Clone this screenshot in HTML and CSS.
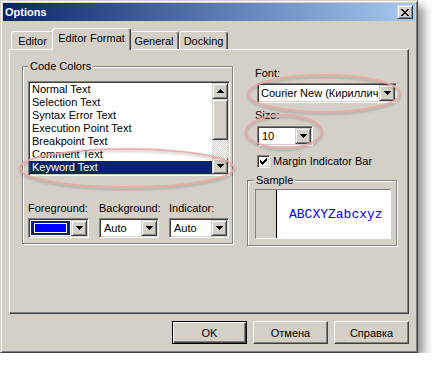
FILE: index.html
```html
<!DOCTYPE html>
<html lang="ru">
<head>
    <meta charset="UTF-8">
    <title>Options</title>
    <link rel="stylesheet" href="styles.css">
</head>
<body>
    <div class="window">
        <div class="titlebar">
            <span class="title">Options</span>
            <button class="close raised">
                <svg width="8" height="7" viewBox="0 0 8 7"><path d="M0 0h2v1H0zM6 0h2v1H6zM1 1h2v1H1zM5 1h2v1H5zM2 2h4v1H2zM3 3h2v1H3zM2 4h4v1H2zM1 5h2v1H1zM5 5h2v1H5zM0 6h2v1H0zM6 6h2v1H6z"/></svg>
            </button>
        </div>

        <div class="tabs">
            <div class="tab tab-editor">Editor</div>
            <div class="tab tab-active">Editor Format</div>
            <div class="tab tab-general">General</div>
            <div class="tab tab-docking">Docking</div>
        </div>

        <div class="panel">
            <div class="group code-colors">
                <div class="group-title">Code Colors</div>
                <div class="listbox sunken">
                    <ul class="items">
                        <li>Normal Text</li>
                        <li>Selection Text</li>
                        <li>Syntax Error Text</li>
                        <li>Execution Point Text</li>
                        <li>Breakpoint Text</li>
                        <li>Comment Text</li>
                        <li class="selected">Keyword Text</li>
                    </ul>
                    <div class="scrollbar">
                        <div class="sb-btn raised">
                            <svg width="7" height="4" viewBox="0 0 7 4"><path d="M3 0h1v1h1v1h1v1h1v1H0V3h1V2h1V1h1z"/></svg>
                        </div>
                        <div class="sb-thumb raised"></div>
                        <div class="sb-track"></div>
                        <div class="sb-btn raised">
                            <svg width="7" height="4" viewBox="0 0 7 4"><path d="M0 0h7v1H6v1H5v1H4v1H3V3H2V2H1V1H0z"/></svg>
                        </div>
                    </div>
                </div>

                <div class="pickers">
                    <div class="picker picker-wide">
                        <div class="field-label">Foreground:</div>
                        <div class="combo sunken">
                            <div class="combo-value"><span class="swatch"><span class="swatch-fill"></span></span></div>
                            <div class="drop raised"><svg width="7" height="4" viewBox="0 0 7 4"><path d="M0 0h7v1H6v1H5v1H4v1H3V3H2V2H1V1H0z"/></svg></div>
                        </div>
                    </div>
                    <div class="picker">
                        <div class="field-label">Background:</div>
                        <div class="combo sunken">
                            <div class="combo-value">Auto</div>
                            <div class="drop raised"><svg width="7" height="4" viewBox="0 0 7 4"><path d="M0 0h7v1H6v1H5v1H4v1H3V3H2V2H1V1H0z"/></svg></div>
                        </div>
                    </div>
                    <div class="picker">
                        <div class="field-label">Indicator:</div>
                        <div class="combo sunken">
                            <div class="combo-value">Auto</div>
                            <div class="drop raised"><svg width="7" height="4" viewBox="0 0 7 4"><path d="M0 0h7v1H6v1H5v1H4v1H3V3H2V2H1V1H0z"/></svg></div>
                        </div>
                    </div>
                </div>
            </div>

            <div class="side">
                <div class="side-label">Font:</div>
                <div class="combo sunken font-combo">
                    <div class="combo-value">Courier New (Кириллич</div>
                    <div class="drop raised"><svg width="7" height="4" viewBox="0 0 7 4"><path d="M0 0h7v1H6v1H5v1H4v1H3V3H2V2H1V1H0z"/></svg></div>
                </div>

                <div class="side-label size-label">Size:</div>
                <div class="combo sunken size-combo">
                    <div class="combo-value">10</div>
                    <div class="drop raised"><svg width="7" height="4" viewBox="0 0 7 4"><path d="M0 0h7v1H6v1H5v1H4v1H3V3H2V2H1V1H0z"/></svg></div>
                </div>

                <div class="check-row">
                    <span class="checkbox sunken">
                        <svg width="7" height="7" viewBox="0 0 7 7"><path d="M6 0h1v1H6zM5 1h2v1H5zM0 2h1v1H0zM4 2h3v1H4zM0 3h2v1H0zM3 3h3v1H3zM0 4h5v1H0zM1 5h3v1H1zM2 6h1v1H2z"/></svg>
                    </span>
                    <span>Margin Indicator Bar</span>
                </div>

                <div class="group sample">
                    <div class="group-title">Sample</div>
                    <div class="sample-box">
                        <div class="sample-margin"></div>
                        <div class="sample-text">ABCXYZabcxyz</div>
                    </div>
                </div>
            </div>
        </div>

        <div class="actions">
            <button class="btn btn-default">OK</button>
            <button class="btn">Отмена</button>
            <button class="btn">Справка</button>
        </div>
    </div>

    <svg class="marks" width="434" height="370" viewBox="0 0 434 370">
        <ellipse cx="127" cy="168" rx="107" ry="19"/>
        <ellipse cx="324" cy="93.5" rx="76" ry="18.5"/>
        <ellipse cx="284" cy="131.5" rx="38" ry="16.5"/>
    </svg>
</body>
</html>
```

FILE: styles.css
```css
body {
    margin: 0;
    background: #ffffff;
    font-family: "Liberation Sans", Arial, sans-serif;
    font-size: 11px;
    color: #000000;
}

/* classic 3d edges */
.raised {
    border: 1px solid;
    border-color: #d4d0c8 #404040 #404040 #d4d0c8;
    box-shadow: inset 1px 1px 0 #ffffff, inset -1px -1px 0 #808080;
}
.sunken {
    border: 1px solid;
    border-color: #808080 #ffffff #ffffff #808080;
    box-shadow: inset 1px 1px 0 #404040, inset -1px -1px 0 #d4d0c8;
    padding: 1px;
}

.window {
    box-sizing: border-box;
    width: 418px;
    height: 353px;
    background: #d4d0c8;
    border: 1px solid;
    border-color: #d4d0c8 #404040 #404040 #d4d0c8;
    box-shadow: inset 1px 1px 0 #ffffff, inset -1px -1px 0 #808080, 6px 6px 9px rgba(0, 0, 0, 0.42);
    padding: 2px 2px 8px;
    display: flex;
    flex-direction: column;
}

.titlebar {
    height: 18px;
    display: flex;
    align-items: center;
    justify-content: space-between;
    padding: 0 2px;
    background: linear-gradient(to right, #0a246a, #a6caf0);
}
.title {
    color: #ffffff;
    font-weight: bold;
    line-height: 18px;
}
.close {
    box-sizing: border-box;
    width: 16px;
    height: 14px;
    padding: 0;
    background: #d4d0c8;
    display: flex;
    align-items: center;
    justify-content: center;
}

.tabs {
    display: flex;
    align-items: flex-end;
    height: 21px;
    margin-top: 7px;
    padding-left: 8px;
}
.tab {
    box-sizing: border-box;
    height: 18px;
    padding-top: 3px;
    line-height: 13px;
    text-align: center;
    white-space: nowrap;
    background: #d4d0c8;
    border: 1px solid;
    border-bottom: 0;
    border-color: #ffffff #404040 transparent #ffffff;
    border-radius: 3px 3px 0 0;
    box-shadow: inset -1px 0 0 #808080;
}
.tab-editor { width: 43px; }
.tab-general { width: 50px; }
.tab-docking { width: 49px; }
.tab-active {
    width: 79px;
    height: 22px;
    margin: 0 -2px -1px;
    position: relative;
    z-index: 1;
}

.panel {
    box-sizing: border-box;
    height: 265px;
    margin: 0 6px;
    border: 1px solid;
    border-color: #ffffff #404040 #404040 #ffffff;
    box-shadow: inset -1px -1px 0 #808080;
    display: flex;
    align-items: flex-start;
    padding: 16px 0 0 12px;
}

.group {
    box-sizing: border-box;
    border: 1px solid #808080;
    box-shadow: inset 1px 1px 0 #ffffff, 1px 1px 0 #ffffff;
}
.group-title {
    width: fit-content;
    margin-top: -7px;
    padding: 0 2px;
    line-height: 13px;
    background: #d4d0c8;
}

.code-colors {
    width: 211px;
    height: 178px;
    margin-right: 14px;
    padding: 0 2px 0 5px;
}

.listbox {
    box-sizing: border-box;
    width: 202px;
    height: 95px;
    margin-top: 8px;
    display: flex;
    background: #ffffff;
}
.items {
    flex: 1;
    list-style: none;
    margin: 0;
    padding: 0;
    overflow: hidden;
}
.items li {
    line-height: 13px;
    padding-left: 2px;
    white-space: nowrap;
}
.items .selected {
    background: #0a246a;
    color: #ffffff;
}

.scrollbar {
    width: 16px;
    display: flex;
    flex-direction: column;
}
.sb-btn {
    box-sizing: border-box;
    height: 16px;
    background: #d4d0c8;
    display: flex;
    align-items: center;
    justify-content: center;
}
.sb-thumb {
    box-sizing: border-box;
    height: 41px;
    background: #d4d0c8;
}
.sb-track {
    flex: 1;
    background: repeating-conic-gradient(#ffffff 0 25%, #d4d0c8 0 50%) 0 0 / 2px 2px;
}

.pickers {
    display: flex;
    gap: 10px;
    margin-top: 26px;
}
.picker { width: 60px; }
.picker-wide { width: 61px; }
.field-label {
    line-height: 13px;
    white-space: nowrap;
}

.combo {
    box-sizing: border-box;
    height: 20px;
    margin-top: 3px;
    display: flex;
    background: #ffffff;
}
.combo-value {
    flex: 1;
    min-width: 0;
    padding-left: 3px;
    line-height: 16px;
    overflow: hidden;
    white-space: nowrap;
}
.drop {
    box-sizing: border-box;
    width: 16px;
    height: 16px;
    background: #d4d0c8;
    display: flex;
    align-items: center;
    justify-content: center;
}
.picker-wide .combo-value { padding-left: 0; }
.swatch {
    display: block;
    box-sizing: border-box;
    height: 14px;
    margin: 1px;
    padding: 2px 3px;
    background: #0a246a;
}
.swatch-fill {
    display: block;
    box-sizing: border-box;
    height: 100%;
    border: 1px solid #ffffff;
    background: #0000ff;
}

.side {
    width: 150px;
    display: flex;
    flex-direction: column;
    align-items: flex-start;
}
.side-label {
    margin: 1px 0 0 8px;
    line-height: 13px;
}
.size-label { margin-top: 6px; }
.font-combo {
    width: 140px;
    margin: 3px 0 0 10px;
}
.font-combo .combo-value { padding-left: 2px; }
.size-combo {
    width: 56px;
    margin: 4px 0 0 10px;
}

.check-row {
    display: flex;
    align-items: center;
    gap: 3px;
    margin: 9px 0 0 10px;
    line-height: 13px;
}
.checkbox {
    box-sizing: border-box;
    width: 13px;
    height: 13px;
    background: #ffffff;
    display: flex;
    align-items: center;
    justify-content: center;
}

.sample {
    width: 150px;
    height: 66px;
    margin-top: 12px;
    padding-left: 7px;
}
.sample .group-title { margin-left: -1px; }
.sample-box {
    box-sizing: border-box;
    width: 136px;
    height: 50px;
    margin-top: 2px;
    display: flex;
    background: #ffffff;
    border: 1px solid;
    border-color: #808080 #ffffff #ffffff #808080;
}
.sample-margin {
    width: 20px;
    background: #d4d0c8;
    border-right: 1px solid #000000;
}
.sample-text {
    display: flex;
    align-items: center;
    padding-left: 12px;
    font-family: "Liberation Mono", "Courier New", monospace;
    font-size: 13px;
    color: #0000ff;
}

.actions {
    display: flex;
    justify-content: flex-end;
    gap: 6px;
    margin-top: 7px;
    padding-right: 6px;
}
.btn {
    box-sizing: border-box;
    width: 75px;
    height: 23px;
    padding: 0;
    font: inherit;
    color: #000000;
    background: #d4d0c8;
    border: 1px solid;
    border-color: #ffffff #404040 #404040 #ffffff;
    box-shadow: inset -1px -1px 0 #808080;
}
.btn-default {
    border-color: #000000;
    box-shadow: inset 1px 1px 0 #ffffff, inset -1px -1px 0 #404040, inset -2px -2px 0 #808080;
}

.marks {
    position: absolute;
    top: 0;
    left: 0;
    pointer-events: none;
    fill: none;
    stroke: #eca6a6;
    stroke-opacity: 0.85;
    stroke-width: 2;
    filter: drop-shadow(0 2px 1px rgba(0, 0, 0, 0.22));
}
```
